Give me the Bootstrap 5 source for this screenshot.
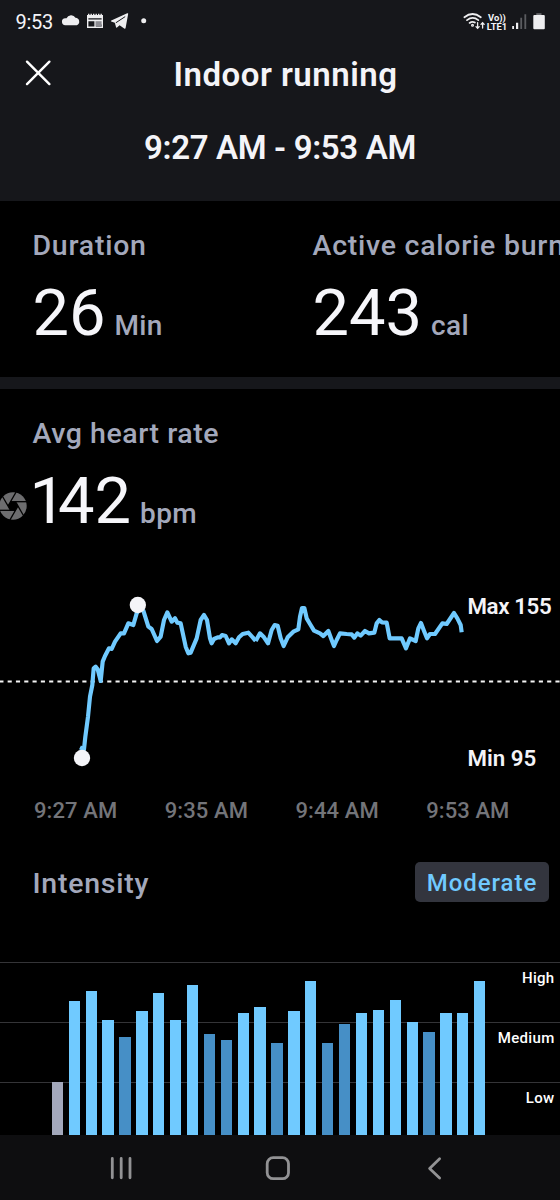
<!DOCTYPE html>
<html lang="en">
<head>
<meta charset="utf-8">
<meta name="viewport" content="width=device-width, initial-scale=1">
<title>Indoor running</title>
<link href="https://cdn.jsdelivr.net/npm/bootstrap@5.3.0/dist/css/bootstrap.min.css" rel="stylesheet">
<style>
  body { background: #000; color: #f4f4f8; font-family: Roboto, "Liberation Sans", sans-serif; font-weight: 500; overflow-x: hidden; }
  .screen { width: 560px; height: 1200px; }
  .topbar { height: 201px; background: #16171b; }
  .status { height: 44px; padding: 0 15px 0 15.5px; font-weight: 400; }
  .clock { font-size: 20px; line-height: 44px; letter-spacing: -.3px; width: 45px; }
  .volte { font-size: 9.4px; line-height: 9px; width: 22px; }
  .title-row { height: 62px; padding-top: 11px; }
  .title-row svg { margin: 4px 0 0 23.5px; }
  .title { font-size: 33px; line-height: 40px; letter-spacing: .5px; width: 436px; font-weight: 600; }
  .period { font-size: 33px; line-height: 40px; margin-top: 21.5px; letter-spacing: -.35px; font-weight: 600; }
  .muted-label { color: #a3a8bb; font-size: 28.5px; line-height: 34px; letter-spacing: .75px; white-space: nowrap; }
  .unit { color: #a3a8bb; font-size: 28px; line-height: 34px; letter-spacing: .3px; }
  .stats { height: 176px; padding-top: 28px; }
  .stat-one { width: 280px; padding-left: 32.5px; }
  .big { font-size: 65px; line-height: 70px; font-weight: 400; color: #f6f6fa; }
  .narrow-one { letter-spacing: -8px; margin-left: -3px; }
  .value-row { margin-top: 14.5px; gap: 9px; }
  .split { height: 12px; background: #16171b; }
  .heart { height: 191px; padding: 28px 0 0 32.5px; }
  .heart .muted-label { letter-spacing: .55px; }
  .shutter { left: -1.5px; top: 103px; }
  .stack { display: grid; }
  .stack > * { grid-area: 1 / 1; }
  .hr-labels { margin-left: 467.5px; padding: 12.5px 0 9.5px; font-size: 22.3px; line-height: 26px; z-index: 1; font-weight: 600; }
  .max-label { letter-spacing: -.4px; }
  .times { height: 62px; padding: 18px 50.5px 0 34px; font-size: 22px; line-height: 26px; color: #737479; letter-spacing: .1px; }
  .intensity { height: 120px; padding: 21px 11px 0 32.5px; }
  .level { background: #33353e; color: #70caff; font-size: 24px; line-height: 43px; height: 40px; width: 134px; border-radius: 5px; letter-spacing: .95px; margin-top: -1px; }
  .bars-area { height: 173px; }
  .zone { height: 60px; border-top: 1px solid #343437; padding: 6px 5.5px 0 0; font-size: 15px; line-height: 18px; letter-spacing: .3px; color: #fff; }
  .zone:last-child { height: 53px; }
  .bars { padding-left: 51.8px; gap: 5.6px; z-index: 1; }
  .bar { width: 11.3px; background: #70caff; }
  .bar-mid { background: #468fc6; }
  .bar-rest { background: #a3a8bb; }
  .navkeys { height: 65px; background: #0e0e10; }
</style>
</head>
<body>
<main class="screen overflow-hidden">
  <header class="topbar">
    <div class="status d-flex align-items-center justify-content-between">
      <div class="d-flex">
        <span class="clock">9:53</span>
        <svg width="88" height="44" viewBox="61 0 88 44" fill="#eeeef0">
          <path d="M65.600 25.200a3.500 3.500 0 0 1-.3-7q.7-.1 1.200.1a5 5 0 0 1 9-.6 3.900 3.900 0 0 1 1.300 7.500z"/>
          <path d="M87 15h16v13H87z"/>
          <path d="M88.400 18.300h13.200v1.300H88.400zM88.400 21.200h6v5.400h-6zM96 24.500h5.600v2.100H96z" fill="#17181c"/>
          <path d="M95.500 21.200h6.100v5.400h-6.100z" fill="#8b8b91"/>
          <path d="M88 14.500h14" stroke="#eeeef0" stroke-width="1.4" stroke-dasharray="1.4 1.1"/>
          <path d="M128.200 13.800L125.600 28q-.3 1.200-1.400.5l-4.600-3.300-2.600 2.300q-.8.500-1-.4l-1.200-4.300-3.600-1.200q-.8-.5.1-1L127.200 13.300q1-.3 1 .5z"/>
          <path d="M115.800 22.800L125.200 16.600" stroke="#16171b" stroke-width="1"/>
          <circle cx="143.700" cy="20.800" r="2.500"/>
        </svg>
      </div>
      <div class="d-flex align-items-center">
        <svg width="24" height="44" viewBox="462 0 24 44" fill="none" stroke="#eeeef0" stroke-width="1.8" stroke-linecap="round">
          <path d="M464.400 17.200q8.200-6.400 16.400 0M467 20.100q5.700-4.400 11.300 0M469.600 22.900q2.700-1.900 5.300-.3"/>
          <circle cx="472.500" cy="25.200" r=".6"/>
          <path d="M477.600 22.600v5.400m-1.600-1.400l1.600 1.700 1.600-1.700M482.600 28v-5m-1.600 1.400l1.600-1.700 1.600 1.700" stroke-width="1.3"/>
        </svg>
        <div class="volte text-center fw-bold"><div>Vo))</div><div>LTE1</div></div>
        <svg width="37" height="44" viewBox="508 0 37 44" fill="#eeeef0">
          <path d="M512.200 26h1.800v3h-1.800zM516 22.700h2.200V29H516z"/>
          <path d="M520.300 17.700h1.800V29h-1.800zM524.400 14.200h1.800V29h-1.800z" fill="#5b5c60"/>
          <path d="M536.300 13.200h5.200v2.500h-5.200z" fill="#66676b"/>
          <rect x="533.300" y="15" width="11.500" height="14.200" rx="1"/>
        </svg>
      </div>
    </div>
    <div class="title-row d-flex align-items-start">
      <svg width="28" height="28" viewBox="0 0 28 28" stroke="#fff" stroke-width="2.4" stroke-linecap="round"><path d="M3 2.700l22.400 22.400M25.400 2.700L3 25.100"/></svg>
      <div class="title text-center ms-3">Indoor running</div>
    </div>
    <div class="period text-center">9:27 AM - 9:53 AM</div>
  </header>

  <section class="stats d-flex">
    <div class="stat-one flex-shrink-0">
      <div class="muted-label">Duration</div>
      <div class="value-row d-flex align-items-baseline"><span class="big">26</span><span class="unit">Min</span></div>
    </div>
    <div class="stat-one flex-shrink-0">
      <div class="muted-label">Active calorie burn</div>
      <div class="value-row d-flex align-items-baseline"><span class="big">243</span><span class="unit">cal</span></div>
    </div>
  </section>
  <div class="split"></div>

  <section class="heart position-relative">
    <svg class="shutter position-absolute" width="28" height="28" viewBox="-14 -14 28 28">
      <circle r="13.7" fill="#6d6d6f"/>
      <g stroke="#000" stroke-width="1.3">
        <path id="blade" d="M14 -4.300L-2.500 -4.300"/>
        <use href="#blade" transform="rotate(60)"/><use href="#blade" transform="rotate(120)"/><use href="#blade" transform="rotate(180)"/><use href="#blade" transform="rotate(240)"/><use href="#blade" transform="rotate(300)"/>
      </g>
      <path d="M-2.500-4.300H2.500L5 0 2.500 4.300H-2.500L-5 0z" fill="#000"/>
    </svg>
    <div class="muted-label">Avg heart rate</div>
    <div class="value-row d-flex align-items-baseline"><span class="big"><span class="narrow-one">1</span>42</span><span class="unit">bpm</span></div>
  </section>

  <section class="stack">
    <svg width="560" height="200" viewBox="0 0 1680 600" fill="none">
      <path d="M-2 304.500H1680" stroke="#f4f4f4" stroke-width="6.5" stroke-dasharray="12.4 12.5"/>
      <g stroke="#70caff" stroke-width="12.5" stroke-linejoin="round">
        <polyline transform="translate(180 0)" points="60,502 72,508 76,470 84,410 90,350 97,315 101,265 107,260 113,268 122,303 128,245 135,228 147,205 155,207 165,185 182,160 192,160 205,130 220,135 230,100 240,85 250,92 265,140 275,147 291,183 302,170 312,120 322,97 335,125 345,115 352,128 362,130 377,200 385,220 392,218 410,175 422,120 432,105 441,120 450,175 455,190 462,177 473,172 480,172 486,165 497,168 507,190 515,178 527,190 537,172 548,162 565,158 578,172 587,183"/>
        <polyline transform="translate(720 0)" points="47,183 60,160 72,172 84,190 95,150 104,135 113,137 122,175 131,198 143,172 160,155 175,148 180,110 186,84 193,84 200,115 210,132 222,152 240,160 250,168 265,153 275,180 282,198 290,180 300,160 320,162 335,163 343,173 352,160 362,167 375,153 387,160 403,158 410,130 418,120 426,127 440,128 449,175 485,175 498,205 510,175 527,183 535,145 543,129 553,155 561,175 570,162 585,162 607,130 620,132 642,99 652,115 662,135 665,157"/>
      </g>
      <g fill="#f4f4f8"><circle cx="246" cy="534" r="24.5"/><circle cx="413.500" cy="75" r="24.5"/></g>
    </svg>
    <div class="hr-labels d-flex flex-column justify-content-between"><span class="max-label">Max 155</span><span>Min 95</span></div>
  </section>
  <div class="times d-flex justify-content-between"><span>9:27 AM</span><span>9:35 AM</span><span>9:44 AM</span><span>9:53 AM</span></div>

  <section class="intensity d-flex justify-content-between align-items-start">
    <div class="muted-label pt-1">Intensity</div>
    <div class="level text-center">Moderate</div>
  </section>

  <section class="bars-area stack">
    <div class="text-end">
      <div class="zone">High</div>
      <div class="zone">Medium</div>
      <div class="zone">Low</div>
    </div>
    <div class="bars d-flex align-items-end">
      <div class="bar bar-rest" style="height:52.7px"></div>
      <div class="bar" style="height:133.7px"></div>
      <div class="bar" style="height:143.7px"></div>
      <div class="bar" style="height:115px"></div>
      <div class="bar bar-mid" style="height:97.7px"></div>
      <div class="bar" style="height:123.7px"></div>
      <div class="bar" style="height:142px"></div>
      <div class="bar" style="height:115px"></div>
      <div class="bar" style="height:150px"></div>
      <div class="bar bar-mid" style="height:100.7px"></div>
      <div class="bar bar-mid" style="height:95px"></div>
      <div class="bar" style="height:122px"></div>
      <div class="bar" style="height:128.5px"></div>
      <div class="bar bar-mid" style="height:92.5px"></div>
      <div class="bar" style="height:123.7px"></div>
      <div class="bar" style="height:153.7px"></div>
      <div class="bar bar-mid" style="height:92.5px"></div>
      <div class="bar bar-mid" style="height:111px"></div>
      <div class="bar" style="height:122px"></div>
      <div class="bar" style="height:125px"></div>
      <div class="bar" style="height:135px"></div>
      <div class="bar" style="height:113.5px"></div>
      <div class="bar bar-mid" style="height:103px"></div>
      <div class="bar" style="height:122px"></div>
      <div class="bar" style="height:122px"></div>
      <div class="bar" style="height:153.7px"></div>
    </div>
  </section>

  <nav class="navkeys">
    <svg class="d-block" width="560" height="65" viewBox="0 1135 560 65" fill="none" stroke="#929294" stroke-width="2.8" stroke-linecap="round" stroke-linejoin="round">
      <path d="M112.300 1158.500v19.300M121.200 1158.500v19.300M130 1158.500v19.300"/>
      <rect x="267.200" y="1157.700" width="21.300" height="21" rx="6"/>
      <path d="M439.600 1158.700l-10 9.700 10 9.600"/>
    </svg>
  </nav>
</main>
<script src="https://cdn.jsdelivr.net/npm/bootstrap@5.3.0/dist/js/bootstrap.bundle.min.js"></script>
</body>
</html>
